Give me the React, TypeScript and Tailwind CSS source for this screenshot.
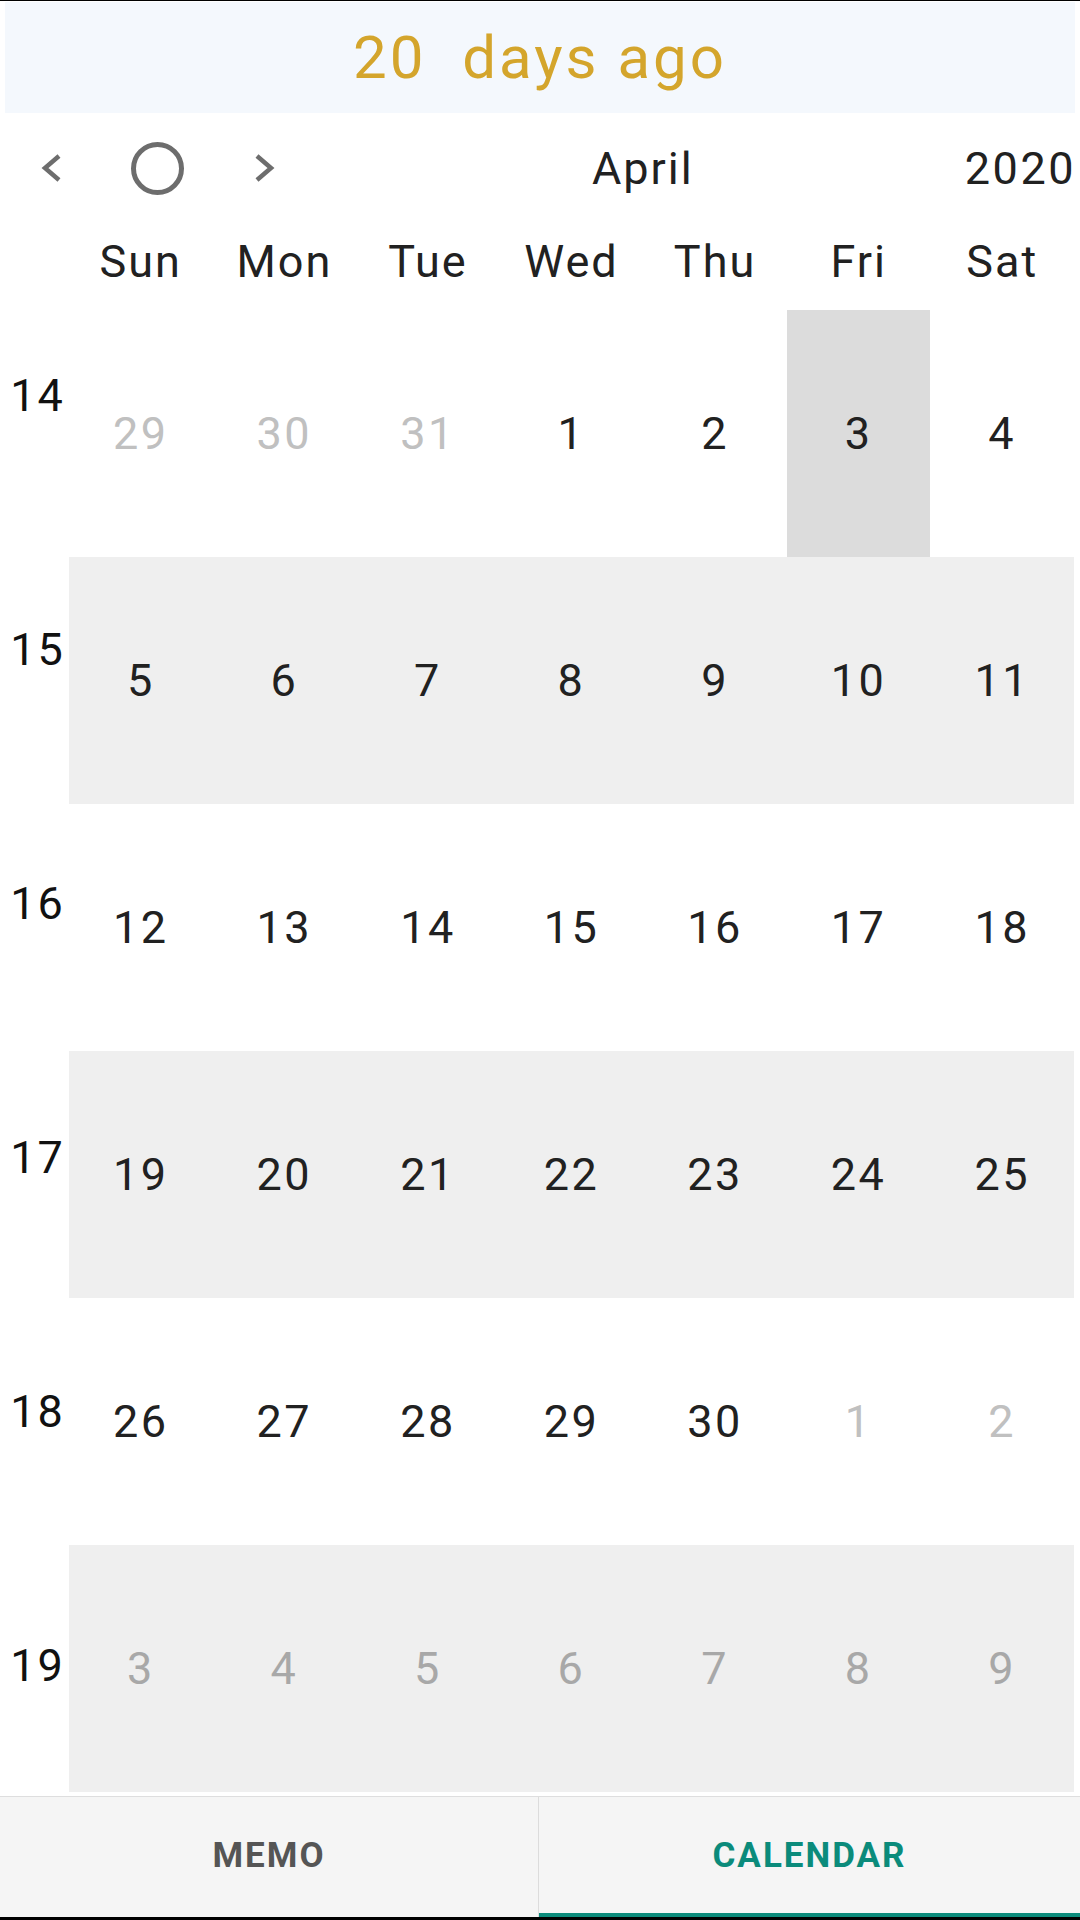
const WEEKDAYS = ["Sun", "Mon", "Tue", "Wed", "Thu", "Fri", "Sat"];

type Day = { n: number; muted?: boolean; selected?: boolean };

const WEEKS: { no: number; shaded: boolean; days: Day[] }[] = [
  {
    no: 14,
    shaded: false,
    days: [
      { n: 29, muted: true },
      { n: 30, muted: true },
      { n: 31, muted: true },
      { n: 1 },
      { n: 2 },
      { n: 3, selected: true },
      { n: 4 },
    ],
  },
  { no: 15, shaded: true, days: [5, 6, 7, 8, 9, 10, 11].map((n) => ({ n })) },
  { no: 16, shaded: false, days: [12, 13, 14, 15, 16, 17, 18].map((n) => ({ n })) },
  { no: 17, shaded: true, days: [19, 20, 21, 22, 23, 24, 25].map((n) => ({ n })) },
  {
    no: 18,
    shaded: false,
    days: [
      { n: 26 },
      { n: 27 },
      { n: 28 },
      { n: 29 },
      { n: 30 },
      { n: 1, muted: true },
      { n: 2, muted: true },
    ],
  },
  { no: 19, shaded: true, days: [3, 4, 5, 6, 7, 8, 9].map((n) => ({ n, muted: true })) },
];

function Chevron({ dir }: { dir: "left" | "right" }) {
  return (
    <svg width="22" height="30" viewBox="0 0 22 30" className="block">
      <polyline
        points={dir === "left" ? "18,3 4,15 18,27" : "4,3 18,15 4,27"}
        fill="none"
        stroke="#6d6d6d"
        strokeWidth="4.5"
      />
    </svg>
  );
}

export default function App() {
  return (
    <div className="w-[1080px] h-[1920px] bg-white flex flex-col overflow-hidden font-['Roboto',sans-serif]">
      <div className="h-[1px] bg-black" />

      {/* relative-day banner */}
      <div className="mx-[5px] mt-[1px] h-[111px] bg-[#f4f8fd] flex items-center justify-center">
        <span className="text-[60px] leading-none text-[#d4a52c] whitespace-pre tracking-[3px]">20  days ago</span>
      </div>

      {/* month navigation */}
      <div className="h-[110px] flex items-center">
        <div className="ml-[41px]">
          <Chevron dir="left" />
        </div>
        <div className="ml-[68px] w-[53px] h-[53px] rounded-full border-[5px] border-[#6d6d6d]" />
        <div className="ml-[69px]">
          <Chevron dir="right" />
        </div>
        <span className="ml-[317px] text-[45px] leading-none text-[#212121] tracking-[2px]">April</span>
        <span className="ml-auto mr-[4px] text-[45px] leading-none text-[#212121] tracking-[2.5px]">2020</span>
      </div>

      <div className="flex">
        {/* week numbers */}
        <div className="w-[69px] pt-[45px] flex flex-col">
          {WEEKS.map((w) => (
            <div key={w.no} className="h-[254px] flex items-center justify-center pl-[6px]">
              <span className="text-[45px] leading-none text-[#111] tracking-[2px]">{w.no}</span>
            </div>
          ))}
        </div>

        <div className="flex-1 pr-[6px]">
          <div className="h-[87px] pb-[10px] grid grid-cols-7 items-center">
            {WEEKDAYS.map((d) => (
              <span key={d} className="text-center text-[45px] leading-none text-[#212121] tracking-[2px]">
                {d}
              </span>
            ))}
          </div>
          {WEEKS.map((w) => (
            <div key={w.no} className={`h-[247px] grid grid-cols-7 ${w.shaded ? "bg-[#efefef]" : ""}`}>
              {w.days.map((d, i) => (
                <div
                  key={i}
                  className={`flex items-center justify-center ${d.selected ? "bg-[#dcdcdc]" : ""}`}
                >
                  <span
                    className={`text-[45px] leading-none tracking-[2.5px] ${
                      d.muted ? (w.shaded ? "text-[#a8a8a8]" : "text-[#c0c0c0]") : "text-[#212121]"
                    }`}
                  >
                    {d.n}
                  </span>
                </div>
              ))}
            </div>
          ))}
        </div>
      </div>

      {/* bottom tabs */}
      <div className="mt-[4px] flex-1 flex flex-col border-t border-[#dedede] bg-[#f5f5f5]">
        <div className="flex-1 flex">
          <div className="w-[539px] flex flex-col border-r border-[#dcdcdc]">
            <div className="flex-1 flex items-center justify-center">
              <span className="text-[35px] leading-none font-bold text-[#555] tracking-[2px]">MEMO</span>
            </div>
            <div className="h-[4px]" />
          </div>
          <div className="flex-1 flex flex-col">
            <div className="flex-1 flex items-center justify-center">
              <span className="text-[35px] leading-none font-bold text-[#0b8b7b] tracking-[2px]">CALENDAR</span>
            </div>
            <div className="h-[4px] bg-[#0b8b7b]" />
          </div>
        </div>
        <div className="h-[3px] bg-black" />
      </div>
    </div>
  );
}
